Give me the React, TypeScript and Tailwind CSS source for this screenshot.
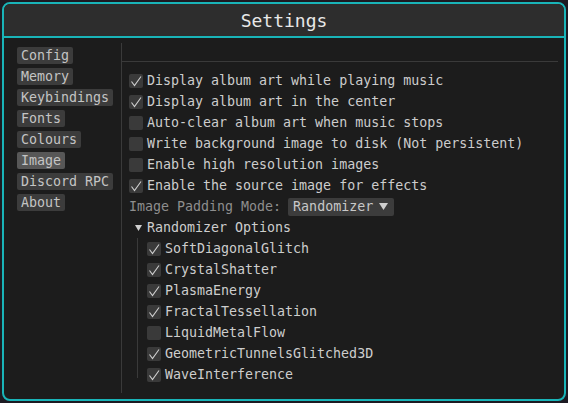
const mono = { fontFamily: '"DejaVu Sans Mono", "Liberation Mono", monospace' };

const tabs = ["Config", "Memory", "Keybindings", "Fonts", "Colours", "Image", "Discord RPC", "About"];

const options = [
  { label: "Display album art while playing music", on: true },
  { label: "Display album art in the center", on: true },
  { label: "Auto-clear album art when music stops", on: false },
  { label: "Write background image to disk (Not persistent)", on: false },
  { label: "Enable high resolution images", on: false },
  { label: "Enable the source image for effects", on: true },
];

const effects = [
  { label: "SoftDiagonalGlitch", on: true },
  { label: "CrystalShatter", on: true },
  { label: "PlasmaEnergy", on: true },
  { label: "FractalTessellation", on: true },
  { label: "LiquidMetalFlow", on: false },
  { label: "GeometricTunnelsGlitched3D", on: true },
  { label: "WaveInterference", on: true },
];

function Checkbox({ on }: { on: boolean }) {
  return (
    <div className="w-[14px] h-[14px] bg-[#3a3a3a] rounded-[2px] shrink-0 flex items-center justify-center">
      {on && (
        <svg width="14" height="14" viewBox="0 0 14 14">
          <path d="M2.5 7.5 L5.5 11.5 L12 2.5" fill="none" stroke="#cfcfcf" strokeWidth="1.1" />
        </svg>
      )}
    </div>
  );
}

function Row({ label, on }: { label: string; on: boolean }) {
  return (
    <div className="h-[21px] flex items-center gap-[4px]">
      <Checkbox on={on} />
      <span className="text-[#cdcdcd] whitespace-pre">{label}</span>
    </div>
  );
}

export default function App() {
  return (
    <div className="w-[568px] h-[403px] bg-[#1c1a22] p-[2px]" style={mono}>
      <div className="h-full flex flex-col border-2 border-[#19b4b8] rounded-[8px] overflow-hidden bg-[#1c1c1c] text-[13.3px] leading-[17px]">
        {/* TITLE */}
        <div className="h-[34px] shrink-0 bg-[#2d2d2d] border-b-2 border-[#19b4b8] flex items-center justify-center">
          <span className="text-[18px] text-[#e8e8e8]">Settings</span>
        </div>

        {/* BODY */}
        <div className="flex-1 flex pl-[13px] pr-[6px] pt-[5px] pb-[6px]">
          <div className="w-[104px] shrink-0 flex flex-col items-start gap-[4px] pt-[4px]">
            {tabs.map((t) => (
              <div
                key={t}
                className={
                  "h-[17px] px-[4px] rounded-[2px] text-[#c4c4c4] whitespace-pre " +
                  (t === "Image" ? "bg-[#575757]" : "bg-[#3c3c3c]")
                }
              >
                {t}
              </div>
            ))}
          </div>

          <div className="flex-1 border-l border-[#3a3a3a] flex flex-col">
            <div className="h-[19px] border-b border-[#3a3a3a] shrink-0" />
            <div className="pl-[7px] pt-[8px] flex flex-col">
              {options.map((o) => (
                <Row key={o.label} label={o.label} on={o.on} />
              ))}

              <div className="h-[21px] flex items-center gap-[7px]">
                <span className="text-[#8e8e8e] whitespace-pre">Image Padding Mode:</span>
                <div className="h-[18px] w-[106px] bg-[#3c3c3c] rounded-[2px] flex items-center justify-between pl-[5px] pr-[6px]">
                  <span className="text-[#c8c8c8]">Randomizer</span>
                  <svg width="9" height="7" viewBox="0 0 9 7">
                    <path d="M0 0 L9 0 L4.5 7 Z" fill="#cfcfcf" />
                  </svg>
                </div>
              </div>

              <div className="h-[21px] flex items-center">
                <div className="w-[18px] flex justify-center pl-[1px]">
                  <svg width="7" height="6" viewBox="0 0 7 6">
                    <path d="M0 0 L7 0 L3.5 6 Z" fill="#cfcfcf" />
                  </svg>
                </div>
                <span className="text-[#cdcdcd]">Randomizer Options</span>
              </div>

              <div className="flex">
                <div className="w-[18px] flex justify-center pr-[1px]">
                  <div className="w-px bg-[#3a3a3a] mb-[7px]" />
                </div>
                <div className="flex flex-col">
                  {effects.map((e) => (
                    <Row key={e.label} label={e.label} on={e.on} />
                  ))}
                </div>
              </div>
            </div>
          </div>
        </div>
      </div>
    </div>
  );
}
